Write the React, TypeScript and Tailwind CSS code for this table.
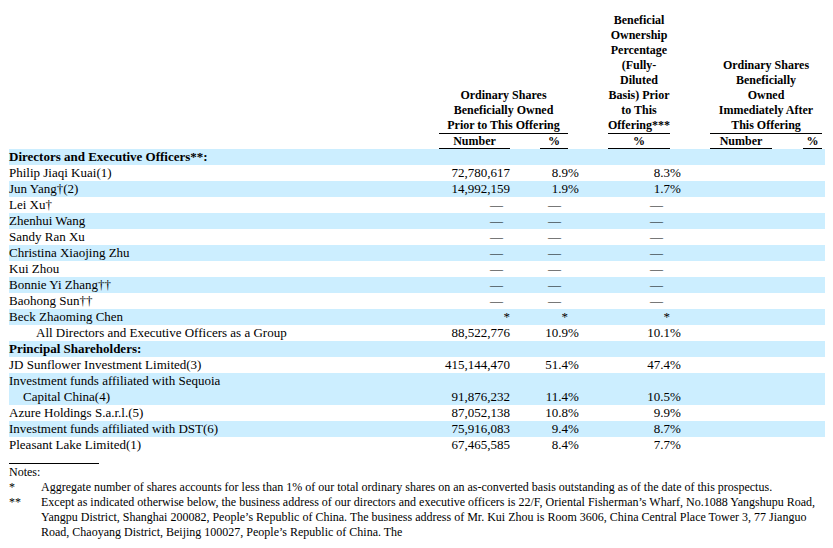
import type { ReactNode } from "react";

type Row = {
  name: ReactNode;
  num?: string;
  pct?: string;
  pct3?: string;
  blue?: boolean;
  bold?: boolean;
  tall?: boolean;
  indent?: boolean;
};

const rows: Row[] = [
  { name: "Directors and Executive Officers**:", blue: true, bold: true },
  { name: "Philip Jiaqi Kuai(1)", num: "72,780,617", pct: "8.9", pct3: "8.3" },
  { name: "Jun Yang†(2)", num: "14,992,159", pct: "1.9", pct3: "1.7", blue: true },
  { name: "Lei Xu†", num: "—", pct: "—", pct3: "—" },
  { name: "Zhenhui Wang", num: "—", pct: "—", pct3: "—", blue: true },
  { name: "Sandy Ran Xu", num: "—", pct: "—", pct3: "—" },
  { name: "Christina Xiaojing Zhu", num: "—", pct: "—", pct3: "—", blue: true },
  { name: "Kui Zhou", num: "—", pct: "—", pct3: "—" },
  { name: "Bonnie Yi Zhang††", num: "—", pct: "—", pct3: "—", blue: true },
  { name: "Baohong Sun††", num: "—", pct: "—", pct3: "—" },
  { name: "Beck Zhaoming Chen", num: "*", pct: "*", pct3: "*", blue: true },
  { name: "All Directors and Executive Officers as a Group", num: "88,522,776", pct: "10.9", pct3: "10.1", indent: true },
  { name: "Principal Shareholders:", blue: true, bold: true },
  { name: "JD Sunflower Investment Limited(3)", num: "415,144,470", pct: "51.4", pct3: "47.4" },
  {
    name: (
      <>
        Investment funds affiliated with Sequoia
        <br />
        Capital China(4)
      </>
    ),
    num: "91,876,232",
    pct: "11.4",
    pct3: "10.5",
    blue: true,
    tall: true,
  },
  { name: "Azure Holdings S.a.r.l.(5)", num: "87,052,138", pct: "10.8", pct3: "9.9" },
  { name: "Investment funds affiliated with DST(6)", num: "75,916,083", pct: "9.4", pct3: "8.7", blue: true },
  { name: "Pleasant Lake Limited(1)", num: "67,465,585", pct: "8.4", pct3: "7.7" },
];

// dashes sit a little left of the figures, asterisks line up with them
function Value({ v, w }: { v?: string; w: string }) {
  const dash = v === "—";
  return <div className={`${w} shrink-0 text-right ${dash ? "pr-[7px]" : ""}`}>{v}</div>;
}

function Pct({ v }: { v?: string }) {
  if (!v || v === "—" || v === "*") return <div className="w-[40px] shrink-0" />;
  return <div className="w-[40px] shrink-0 text-left">%</div>;
}

export default function App() {
  return (
    <div
      className="min-h-[548px] w-[833px] bg-white pl-[9px] text-[13px] text-black"
      style={{ fontFamily: '"Liberation Serif", "Times New Roman", serif' }}
    >
      {/* column headings */}
      <div className="flex w-[816px] items-end whitespace-nowrap pt-[13px] text-[12px] font-bold leading-[15px]">
        <div className="w-[430px] shrink-0" />
        <div className="w-[129px] shrink-0 border-b border-black text-center">
          Ordinary Shares
          <br />
          Beneficially Owned
          <br />
          Prior to This Offering
        </div>
        <div className="w-[40px] shrink-0" />
        <div className="w-[62px] shrink-0 border-b border-black text-center">
          Beneficial
          <br />
          Ownership
          <br />
          Percentage
          <br />
          (Fully-
          <br />
          Diluted
          <br />
          Basis) Prior
          <br />
          to This
          <br />
          Offering***
        </div>
        <div className="w-[40px] shrink-0" />
        <div className="w-[112px] shrink-0 border-b border-black text-center">
          Ordinary Shares
          <br />
          Beneficially
          <br />
          Owned
          <br />
          Immediately After
          <br />
          This Offering
        </div>
      </div>
      <div className="flex w-[816px] text-[12px] font-bold leading-[14px]">
        <div className="w-[430px] shrink-0" />
        <div className="w-[71px] shrink-0 border-b border-black text-center">Number</div>
        <div className="w-[30px] shrink-0" />
        <div className="w-[28px] shrink-0 border-b border-black text-center">%</div>
        <div className="w-[40px] shrink-0" />
        <div className="w-[62px] shrink-0 border-b border-black text-center">%</div>
        <div className="w-[40px] shrink-0" />
        <div className="w-[62px] shrink-0 border-b border-black text-center">Number</div>
        <div className="w-[31px] shrink-0" />
        <div className="w-[19px] shrink-0 border-b border-black text-center">%</div>
      </div>

      {/* body rows */}
      <div className="w-[816px] leading-[16px]">
        {rows.map((r, i) => (
          <div
            key={i}
            className={`flex items-end ${r.tall ? "h-[32px]" : "h-[16px]"} ${r.blue ? "bg-[#cceeff]" : ""}`}
          >
            <div
              className={`w-[430px] shrink-0 whitespace-nowrap ${r.bold ? "font-bold" : ""} ${r.indent ? "pl-[27px]" : ""} ${r.tall ? "pl-[14px] -indent-[14px]" : ""}`}
            >
              {r.name}
            </div>
            <Value v={r.num} w="w-[71px]" />
            <div className="w-[30px] shrink-0" />
            <Value v={r.pct} w="w-[28px]" />
            <Pct v={r.pct} />
            <Value v={r.pct3} w="w-[62px]" />
            <Pct v={r.pct3} />
            <div className="w-[115px] shrink-0" />
          </div>
        ))}
      </div>

      {/* notes */}
      <div className="mt-[10px] h-px w-[90px] bg-black" />
      <div className="whitespace-nowrap pt-[1px] text-[12px] leading-[15px]">
        <div>Notes:</div>
        <div className="flex">
          <div className="w-[32px] shrink-0">*</div>
          <div>
            Aggregate number of shares accounts for less than 1% of our total ordinary shares on an as-converted basis
            outstanding as of the date of this prospectus.
          </div>
        </div>
        <div className="flex">
          <div className="w-[32px] shrink-0">**</div>
          <div>
            Except as indicated otherwise below, the business address of our directors and executive officers is 22/F,
            Oriental Fisherman’s Wharf, No.1088 Yangshupu Road,
            <br />
            Yangpu District, Shanghai 200082, People’s Republic of China. The business address of Mr. Kui Zhou is Room
            3606, China Central Place Tower 3, 77 Jianguo
            <br />
            Road, Chaoyang District, Beijing 100027, People’s Republic of China. The
          </div>
        </div>
      </div>
    </div>
  );
}
